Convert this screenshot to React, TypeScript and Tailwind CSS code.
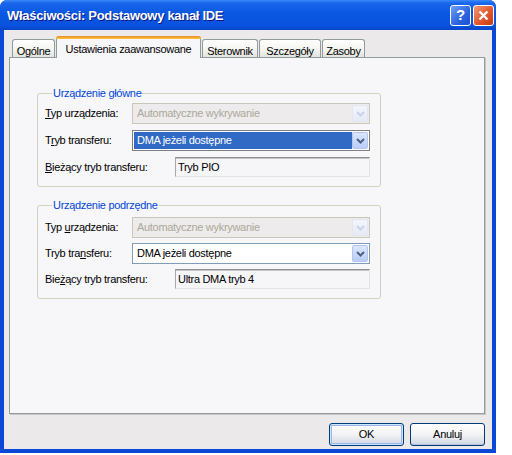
import React from 'react';

const font = "font-['Liberation_Sans',Arial,sans-serif]";

function Chevron({ disabled }: { disabled?: boolean }) {
  return (
    <svg width="9" height="6" viewBox="0 0 9 6">
      <path d="M1 1 L4.5 4.5 L8 1" fill="none" stroke={disabled ? '#C9D3E8' : '#4D6185'} strokeWidth="2" />
    </svg>
  );
}

function DropButton({ disabled }: { disabled?: boolean }) {
  return (
    <div
      className={
        'w-[16px] h-[17px] flex items-center justify-center rounded-[2px] border ' +
        (disabled
          ? 'border-[#E3E6F0] bg-[linear-gradient(to_bottom,#F3F5FB,#E5EAF6)]'
          : 'border-[#B4C6EE] bg-[linear-gradient(to_bottom,#DCE6FD,#B9CDF7)]')
      }
    >
      <Chevron disabled={disabled} />
    </div>
  );
}

function Combo({ value, disabled, selected }: { value: string; disabled?: boolean; selected?: boolean }) {
  return (
    <div
      className={
        'flex-1 h-[21px] flex items-center border pl-[1px] pr-[1px] ' +
        (disabled ? 'border-[#C9C7BA] bg-[#EDEBEC]' : selected ? 'border-[#7F7F7F] bg-white' : 'border-[#7F9DB9] bg-white')
      }
    >
      <div
        className={
          'flex-1 h-[17px] flex items-center pl-[3px] ' +
          (disabled ? 'text-[#ACA899]' : selected ? 'bg-[#316AC5] text-white' : 'text-black')
        }
      >
        {value}
      </div>
      <DropButton disabled={disabled} />
    </div>
  );
}

function Field({ value }: { value: string }) {
  return (
    <div className="flex-1 h-[20px] flex items-center pl-[2px] border border-t-[#8E8E8E] border-l-[#A7A7A7] border-r-[#E3E3E3] border-b-[#E3E3E3] shadow-[inset_0_1px_0_#C5C5C5] bg-[#F6F5F8]">
      {value}
    </div>
  );
}

function Group({
  legend,
  children,
  className,
}: {
  legend: string;
  children: React.ReactNode;
  className?: string;
}) {
  return (
    <fieldset className={'w-[344px] border border-[#D0D0BF] rounded-[3px] px-[7px] pb-[9px] ' + (className ?? '')}>
      <legend className="ml-[7px] px-[1px] leading-[13px] text-[#0046D5]">{legend}</legend>
      {children}
    </fieldset>
  );
}

function Row({ label, labelWidth, children }: { label: React.ReactNode; labelWidth: string; children: React.ReactNode }) {
  return (
    <div className="flex items-center pr-[3px]">
      <div className={labelWidth + ' shrink-0'}>{label}</div>
      {children}
    </div>
  );
}

function Tab({ label, w, active }: { label: string; w: string; active?: boolean }) {
  if (active) {
    return (
      <div className={w + ' h-[22px] -mb-[1px] relative flex flex-col bg-[#F7F6F9] border-x border-[#919B9C] rounded-t-[3px]'}>
        <div className="h-[3px] -mx-[1px] rounded-t-[3px] bg-[linear-gradient(to_bottom,#E68B2C,#FFC73C)]" />
        <div className="flex-1 flex justify-center pt-[2px]">{label}</div>
      </div>
    );
  }
  return (
    <div
      className={
        w +
        ' h-[18px] flex justify-center pt-[3px] border border-b-0 border-[#919B9C] rounded-t-[3px] bg-[linear-gradient(to_bottom,#FFFFFF,#F3F3EF_60%,#E4E4DE)]'
      }
    >
      {label}
    </div>
  );
}

function XPButton({ label, def }: { label: string; def?: boolean }) {
  return (
    <div
      className={
        'w-[75px] h-[23px] flex items-center justify-center rounded-[3px] border border-[#003C74] bg-[linear-gradient(to_bottom,#FFFFFF,#F3F3F6_50%,#D8DCE8_90%,#C3CAE0)] ' +
        (def ? 'shadow-[inset_0_0_0_1px_#CEE7FF,inset_0_0_0_2px_#98B8EA]' : 'shadow-[inset_0_-1px_0_#B6C2DE]')
      }
    >
      {label}
    </div>
  );
}

export default function App() {
  return (
    <div className={'w-[512px] h-[455px] bg-white text-[11px] tracking-[-0.3px] text-black ' + font}>
      <div className="w-[496px] h-[453px] flex flex-col rounded-t-[7px] bg-[#0B48D8]">
        <div className="h-[30px] shrink-0 flex items-center pl-[7px] pr-[2px] rounded-t-[7px] bg-[linear-gradient(to_bottom,#3B8BF7_0%,#1A66EC_10%,#0A58E2_45%,#0A52DD_85%,#0847C8_100%)]">
          <div className="flex-1 text-white font-bold text-[13px] tracking-[-0.3px] pt-[1px] [text-shadow:1px_1px_0_#0A1883]">
            Właściwości: Podstawowy kanał IDE
          </div>
          <div className="flex gap-[2px]">
            <div className="w-[21px] h-[21px] rounded-[3px] border border-white flex items-center justify-center text-white font-bold text-[15px] bg-[linear-gradient(135deg,#6FA0F8,#2C64E0_60%,#1B50D0)]">
              ?
            </div>
            <div className="w-[21px] h-[21px] rounded-[3px] border border-white flex items-center justify-center bg-[linear-gradient(135deg,#F09A78,#E2582C_55%,#C83A10)]">
              <svg width="11" height="11" viewBox="0 0 11 11">
                <path d="M1.5 1.5 L9.5 9.5 M9.5 1.5 L1.5 9.5" stroke="white" strokeWidth="2.4" />
              </svg>
            </div>
          </div>
        </div>
        <div className="flex-1 mx-[4px] mb-[4px] bg-[#ECE9EB] flex flex-col pl-[5px] pr-[7px] pt-[6px]">
          <div className="h-[21px] flex items-end gap-[1px] ml-[3px] relative z-10">
            <Tab label="Ogólne" w="w-[43px]" />
            <Tab label="Ustawienia zaawansowane" w="w-[145px]" active />
            <Tab label="Sterownik" w="w-[56px]" />
            <Tab label="Szczegóły" w="w-[62px]" />
            <Tab label="Zasoby" w="w-[43px]" />
          </div>
          <div className="h-[357px] border border-[#919B9C] bg-[#F7F6F9] shadow-[1px_1px_0_#C8C6CC] pl-[27px] pt-[29px] flex flex-col gap-[12px]">
            <Group legend="Urządzenie główne">
              <div className="flex flex-col gap-[6px] pt-[3px]">
                <Row labelWidth="w-[87px]" label={<><u>T</u>yp urządzenia:</>}>
                  <Combo value="Automatyczne wykrywanie" disabled />
                </Row>
                <Row labelWidth="w-[87px]" label={<>T<u>r</u>yb transferu:</>}>
                  <Combo value="DMA jeżeli dostępne" selected />
                </Row>
                <Row labelWidth="w-[130px]" label={<><u>B</u>ieżący tryb transferu:</>}>
                  <Field value="Tryb PIO" />
                </Row>
              </div>
            </Group>
            <Group legend="Urządzenie podrzędne">
              <div className="flex flex-col gap-[5px] pt-[5px]">
                <Row labelWidth="w-[87px]" label={<>Typ <u>u</u>rządzenia:</>}>
                  <Combo value="Automatyczne wykrywanie" disabled />
                </Row>
                <Row labelWidth="w-[87px]" label={<>Tryb tra<u>n</u>sferu:</>}>
                  <Combo value="DMA jeżeli dostępne" />
                </Row>
                <Row labelWidth="w-[130px]" label={<>Bie<u>ż</u>ący tryb transferu:</>}>
                  <Field value="Ultra DMA tryb 4" />
                </Row>
              </div>
            </Group>
          </div>
          <div className="flex justify-end gap-[6px] mt-[9px]">
            <XPButton label="OK" def />
            <XPButton label="Anuluj" />
          </div>
        </div>
      </div>
    </div>
  );
}
